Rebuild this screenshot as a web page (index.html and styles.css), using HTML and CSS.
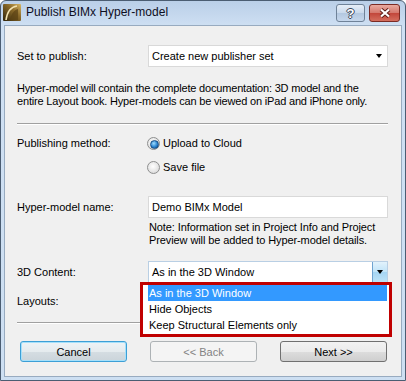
FILE: index.html
```html
<!DOCTYPE html>
<html lang="en">
  <head>
    <meta charset="UTF-8" />
    <title>Publish BIMx Hyper-model</title>
    <link rel="stylesheet" href="styles.css">
  </head>
  <body>
    <div class="window">
      <div class="title-bar">
        <svg class="app-icon" viewBox="0 0 18 17">
          <defs>
            <linearGradient id="ico" x1="0" y1="1" x2="1" y2="0">
              <stop offset="0" stop-color="#2e2208" />
              <stop offset="0.6" stop-color="#8a6a2a" />
              <stop offset="1" stop-color="#d9b866" />
            </linearGradient>
          </defs>
          <rect x="0" y="0" width="18" height="17" rx="1" fill="url(#ico)" />
          <path d="M3 16 C4 9 7 3 14 2" fill="none" stroke="#f3e3b0" stroke-width="1.6" />
          <path d="M7 16 C8 10 11 6 15 5 L15 16 Z" fill="#5a4214" opacity="0.7" />
        </svg>
        <div class="title">Publish BIMx Hyper-model</div>
        <div class="caption-buttons">
          <div class="cap-btn help">?</div>
          <div class="cap-btn close">
            <svg width="12" height="10" viewBox="0 0 12 10">
              <path d="M2 1.5 L10 8.5 M10 1.5 L2 8.5" stroke="#5a1a14" stroke-width="4" />
              <path d="M2 1.5 L10 8.5 M10 1.5 L2 8.5" stroke="#fff" stroke-width="2.2" />
            </svg>
          </div>
        </div>
      </div>

      <div class="content">
        <div class="row">
          <div class="label">Set to publish:</div>
          <div class="select">Create new publisher set<span class="arrow"></span></div>
        </div>

        <p class="info">
          Hyper-model will contain the complete documentation: 3D model and the<br />
          entire Layout book. Hyper-models can be viewed on iPad and iPhone only.
        </p>

        <div class="separator"></div>

        <div class="row method">
          <div class="label">Publishing method:</div>
          <div class="radios">
            <div class="radio checked"><span class="dot"></span>Upload to Cloud</div>
            <div class="radio"><span class="dot"></span>Save file</div>
          </div>
        </div>

        <div class="row name-row">
          <div class="label">Hyper-model name:</div>
          <div class="input">Demo BIMx Model</div>
        </div>
        <p class="note">
          Note: Information set in Project Info and Project<br />
          Preview will be added to Hyper-model details.
        </p>

        <div class="row content-row">
          <div class="label">3D Content:</div>
          <div class="select open">
            As in the 3D Window
            <span class="drop-btn"><span class="arrow"></span></span>
            <div class="dropdown-list">
              <div class="option selected">As in the 3D Window</div>
              <div class="option">Hide Objects</div>
              <div class="option">Keep Structural Elements only</div>
            </div>
          </div>
        </div>

        <div class="row layouts-row">
          <div class="label">Layouts:</div>
        </div>

        <div class="separator bottom-sep"></div>

        <div class="buttons">
          <button class="btn default">Cancel</button>
          <button class="btn" disabled>&lt;&lt; Back</button>
          <button class="btn">Next &gt;&gt;</button>
        </div>
      </div>
    </div>
  </body>
</html>
```

FILE: styles.css
```css
* {
  box-sizing: border-box;
}
body {
  margin: 0;
  font-family: "Liberation Sans", Arial, sans-serif;
  font-size: 11px;
  color: #000;
}
.window {
  width: 406px;
  height: 381px;
  border: 1px solid #4b5d72;
  border-radius: 6px 6px 0 0;
  background: linear-gradient(#bacfe8, #cfe0f3 26px, #cddff2);
  display: flex;
  flex-direction: column;
}
.title-bar {
  height: 24px;
  flex-shrink: 0;
  display: flex;
  align-items: flex-start;
  padding: 3px 5px 0 2px;
}
.app-icon {
  width: 18px;
  height: 17px;
}
.title {
  flex: 1;
  margin-left: 5px;
  font-size: 12px;
  line-height: 17px;
  color: #0e0e1e;
}
.caption-buttons {
  display: flex;
  gap: 4px;
}
.cap-btn {
  height: 18px;
  border-radius: 3px;
  display: flex;
  align-items: center;
  justify-content: center;
}
.help {
  width: 29px;
  border: 1px solid #6f8298;
  background: linear-gradient(#e6eef8, #c9d9ec 50%, #b3c8e0 51%, #c6d7ec);
  color: #fff;
  font-weight: bold;
  font-size: 13px;
  text-shadow: 1px 0 #3a4658, -1px 0 #3a4658, 0 1px #3a4658, 0 -1px #3a4658;
}
.close {
  width: 31px;
  border: 1px solid #7b2b24;
  background: linear-gradient(#e9aa9f, #d4776c 50%, #c2463a 51%, #d46e5e);
}
.content {
  flex: 1;
  margin: 0 3px 3px;
  border: 1px solid #98abc0;
  background: #f0f0f0;
  padding: 19px 13px 0 12px;
  display: flex;
  flex-direction: column;
}
.row {
  display: grid;
  grid-template-columns: 131px 1fr;
  align-items: center;
}
.select,
.input {
  height: 22px;
  background: #fff;
  border: 1px solid #d9d9d9;
  padding: 0 5px 0 3px;
  display: flex;
  align-items: center;
  justify-content: space-between;
  position: relative;
}
.arrow {
  width: 0;
  height: 0;
  border-left: 3.5px solid transparent;
  border-right: 3.5px solid transparent;
  border-top: 4px solid #000;
}
.info {
  margin: 15px 0 0;
  line-height: 13px;
  letter-spacing: -0.18px;
}
.separator {
  margin-top: 15px;
  border-top: 1px solid #a0a0a0;
  border-bottom: 1px solid #fff;
}
.method {
  margin-top: 6px;
  align-items: start;
}
.method .label {
  line-height: 24px;
}
.radio {
  height: 24px;
  display: flex;
  align-items: center;
  margin-left: -1px;
}
.dot {
  width: 13px;
  height: 13px;
  margin-right: 3px;
  border-radius: 50%;
  border: 1px solid #8e8f8f;
  background: radial-gradient(circle at 45% 40%, #fff, #e4e4e4 60%, #cfcfcf);
  position: relative;
}
.checked .dot::after {
  content: "";
  position: absolute;
  left: 2px;
  top: 2px;
  width: 7px;
  height: 7px;
  border-radius: 50%;
  border: 1px solid #1b4f86;
  background: radial-gradient(circle at 40% 35%, #9fdcff, #2a83d0 55%, #0f4a80);
}
.name-row {
  margin-top: 17px;
}
.note {
  margin: 3px 0 0 132px;
  line-height: 13px;
  letter-spacing: -0.1px;
}
.content-row {
  margin-top: 14px;
}
.select.open {
  padding-right: 0;
  border-color: #b9cfe4;
}
.drop-btn {
  width: 15px;
  height: 20px;
  border-left: 1px solid #6fa3d0;
  background: linear-gradient(#e2f2fc, #c0e3f8 50%, #a5d5f3 51%, #bde2f7);
  display: flex;
  align-items: center;
  justify-content: center;
}
.dropdown-list {
  position: absolute;
  left: -9px;
  top: 20px;
  width: 252px;
  border: 3px solid #c00000;
  background: #fff;
  padding: 0 2px 1px 5px;
  z-index: 2;
}
.option {
  height: 16px;
  line-height: 16px;
  padding-left: 1px;
}
.option.selected {
  background: #3399ff;
  color: #fff;
}
.layouts-row {
  margin-top: 10px;
  line-height: 16px;
}
.bottom-sep {
  margin-top: 13px;
}
.buttons {
  margin-top: 17px;
  padding: 0 1px 0 3px;
  display: flex;
  justify-content: space-between;
}
.btn {
  width: 107px;
  height: 21px;
  font-family: inherit;
  font-size: 11px;
  color: #000;
  border: 1px solid #707070;
  border-radius: 3px;
  background: linear-gradient(#f2f2f2, #ebebeb 50%, #dddddd 51%, #cfcfcf);
  padding: 0;
}
.btn.default {
  border-color: #3c9fd6;
  box-shadow: inset 0 0 0 1px #a6e0fa;
  background: linear-gradient(#eef3f6, #e5ebee 50%, #d5dde2 51%, #cbd4da);
}
.btn:disabled {
  border-color: #adb2b5;
  background: #f4f4f4;
  color: #838383;
}
```
